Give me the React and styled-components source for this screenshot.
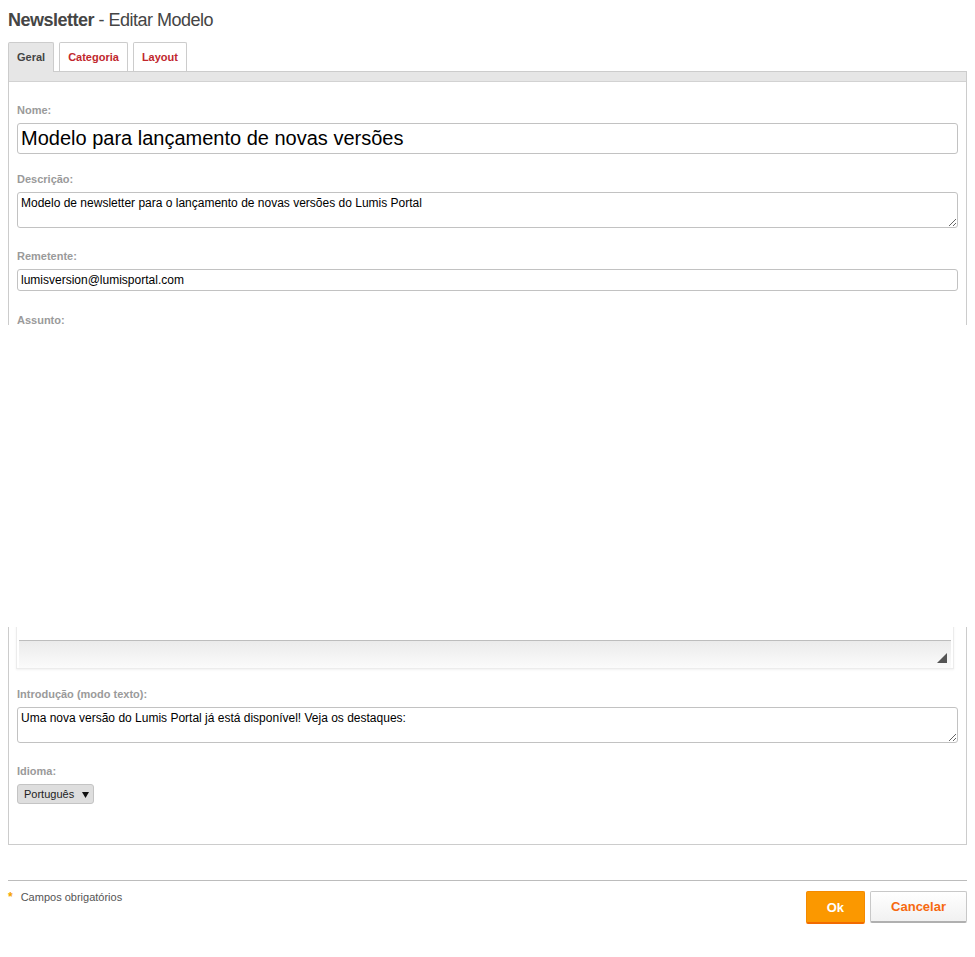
import React from "react";
import styled, { createGlobalStyle } from "styled-components";

const GlobalStyle = createGlobalStyle`
  html, body { margin: 0; padding: 0; background: #fff; }
  body { font-family: "Liberation Sans", Arial, sans-serif; }
  * { box-sizing: border-box; }
`;

const Page = styled.div`
  position: relative;
  padding: 0 8px 40px;
  width: 975px;
`;

const Title = styled.h1`
  margin: 0;
  padding-top: 10px;
  font-size: 18px;
  line-height: 21px;
  font-weight: normal;
  letter-spacing: -0.5px;
  color: #454545;
  b { font-weight: bold; }
`;

const Tabs = styled.div`
  display: flex;
  gap: 5px;
  margin-top: 11px;
  align-items: flex-end;
`;

const Tab = styled.div`
  position: relative;
  z-index: 1;
  height: ${(p) => (p.$active ? "30px" : "29px")};
  margin-bottom: ${(p) => (p.$active ? "-1px" : "0")};
  padding: 0 8px;
  border: 1px solid #cccccc;
  border-bottom: none;
  border-radius: 2px 2px 0 0;
  background: ${(p) => (p.$active ? "#e6e6e6" : "#ffffff")};
  color: ${(p) => (p.$active ? "#444444" : "#c1272d")};
  font-size: 11px;
  font-weight: bold;
  line-height: 29px;
  cursor: pointer;
`;

const Panel = styled.div`
  border: 1px solid #cccccc;
`;

const PanelBar = styled.div`
  height: 10px;
  background: #e6e6e6;
  border-bottom: 1px solid #d2d2d2;
`;

const PanelBody = styled.div`
  padding: 22px 8px 40px;
`;

const Field = styled.div`
  margin-top: ${(p) => p.$top || 0}px;
`;

const Label = styled.label`
  display: block;
  font-size: 11px;
  line-height: 13px;
  font-weight: bold;
  color: #9a9a9a;
  margin-bottom: 6px;
`;

const TextInput = styled.input`
  display: block;
  width: 100%;
  height: ${(p) => p.$h || 22}px;
  margin: 0;
  padding: 0 3px;
  border: 1px solid #c2c2c2;
  border-radius: 3px;
  font-family: "Liberation Sans", Arial, sans-serif;
  font-size: ${(p) => p.$size || 12}px;
  color: #000;
  background: #fff;
  outline: none;
`;

const TextArea = styled.textarea`
  display: block;
  width: 100%;
  height: 36px;
  margin: 0;
  padding: 3px;
  border: 1px solid #c2c2c2;
  border-radius: 3px;
  font-family: "Liberation Sans", Arial, sans-serif;
  font-size: 12px;
  line-height: 14px;
  color: #000;
  background: #fff;
  outline: none;
  resize: vertical;
`;

const Editor = styled.div`
  margin: 16px 0 0 -1px;
  width: 938px;
  border: 1px solid #ececec;
  box-shadow: 0 1px 2px rgba(0, 0, 0, 0.06);
`;

const EditorContent = styled.div`
  height: 268px;
  background: #fff;
`;

const EditorBar = styled.div`
  margin: 0 2px;
  height: 28px;
  border-top: 1px solid #bdbdbd;
  background: linear-gradient(#ebebeb, #fbfbfb);
  display: flex;
  justify-content: flex-end;
  align-items: flex-end;
  padding: 0 4px 5px 0;
`;

const Hidden = styled.div`
  position: absolute;
  left: 0;
  right: 0;
  top: 325px;
  height: 302px;
  background: #fff;
  z-index: 5;
`;

const SelectBox = styled.div`
  display: inline-flex;
  align-items: center;
  gap: 8px;
  height: 20px;
  padding: 0 4px 0 6px;
  background: #dedede;
  border: 1px solid #c4c4c4;
  border-radius: 3px;
  font-size: 11px;
  color: #222;
  cursor: pointer;
`;

const Footer = styled.div`
  margin-top: 35px;
  border-top: 1px solid #bcbcbc;
  padding-top: 10px;
  display: flex;
  justify-content: space-between;
  align-items: flex-start;
`;

const Note = styled.div`
  font-size: 11px;
  line-height: 13px;
  color: #555;
`;

const Star = styled.span`
  color: #f5a300;
  font-size: 12px;
  font-weight: bold;
  margin-right: 8px;
`;

const Buttons = styled.div`
  display: flex;
  gap: 5px;
  align-items: flex-start;
`;

const Button = styled.button`
  height: ${(p) => (p.$primary ? "33px" : "32px")};
  padding: 0 20px;
  margin: 0;
  font-family: "Liberation Sans", Arial, sans-serif;
  font-size: 13px;
  font-weight: bold;
  border-radius: 2px;
  cursor: pointer;
  color: ${(p) => (p.$primary ? "#ffffff" : "#f6690f")};
  background: ${(p) =>
    p.$primary ? "#fb9800" : "linear-gradient(#ffffff, #f1f1f1)"};
  border: 1px solid ${(p) => (p.$primary ? "#f48a00" : "#c8c8c8")};
  border-bottom: 2px solid ${(p) => (p.$primary ? "#f26b00" : "#b0b0b0")};
`;

function Arrow() {
  return (
    <svg width="7" height="7" viewBox="0 0 7 7">
      <path d="M0 1 L7 1 L3.5 7 Z" fill="#111" />
    </svg>
  );
}

function Resize() {
  return (
    <svg width="10" height="10" viewBox="0 0 10 10">
      <path d="M10 0 L10 10 L0 10 Z" fill="#555" />
    </svg>
  );
}

export default function App() {
  return (
    <Page>
      <GlobalStyle />
      <Title>
        <b>Newsletter</b> - Editar Modelo
      </Title>
      <Tabs>
        <Tab $active>Geral</Tab>
        <Tab>Categoria</Tab>
        <Tab>Layout</Tab>
      </Tabs>
      <Panel>
        <PanelBar />
        <PanelBody>
          <Field>
            <Label>Nome:</Label>
            <TextInput
              $h={31}
              $size={20}
              defaultValue="Modelo para lançamento de novas versões"
            />
          </Field>
          <Field $top={19}>
            <Label>Descrição:</Label>
            <TextArea defaultValue="Modelo de newsletter para o lançamento de novas versões do Lumis Portal" />
          </Field>
          <Field $top={22}>
            <Label>Remetente:</Label>
            <TextInput defaultValue="lumisversion@lumisportal.com" />
          </Field>
          <Field $top={23}>
            <Label>Assunto:</Label>
            <TextInput defaultValue="" />
            <Editor>
              <EditorContent />
              <EditorBar>
                <Resize />
              </EditorBar>
            </Editor>
          </Field>
          <Field $top={19}>
            <Label>Introdução (modo texto):</Label>
            <TextArea defaultValue="Uma nova versão do Lumis Portal já está disponível! Veja os destaques:" />
          </Field>
          <Field $top={22}>
            <Label>Idioma:</Label>
            <SelectBox>
              <span>Português</span>
              <Arrow />
            </SelectBox>
          </Field>
        </PanelBody>
      </Panel>
      <Footer>
        <Note>
          <Star>*</Star>Campos obrigatórios
        </Note>
        <Buttons>
          <Button $primary>Ok</Button>
          <Button>Cancelar</Button>
        </Buttons>
      </Footer>
      <Hidden />
    </Page>
  );
}
